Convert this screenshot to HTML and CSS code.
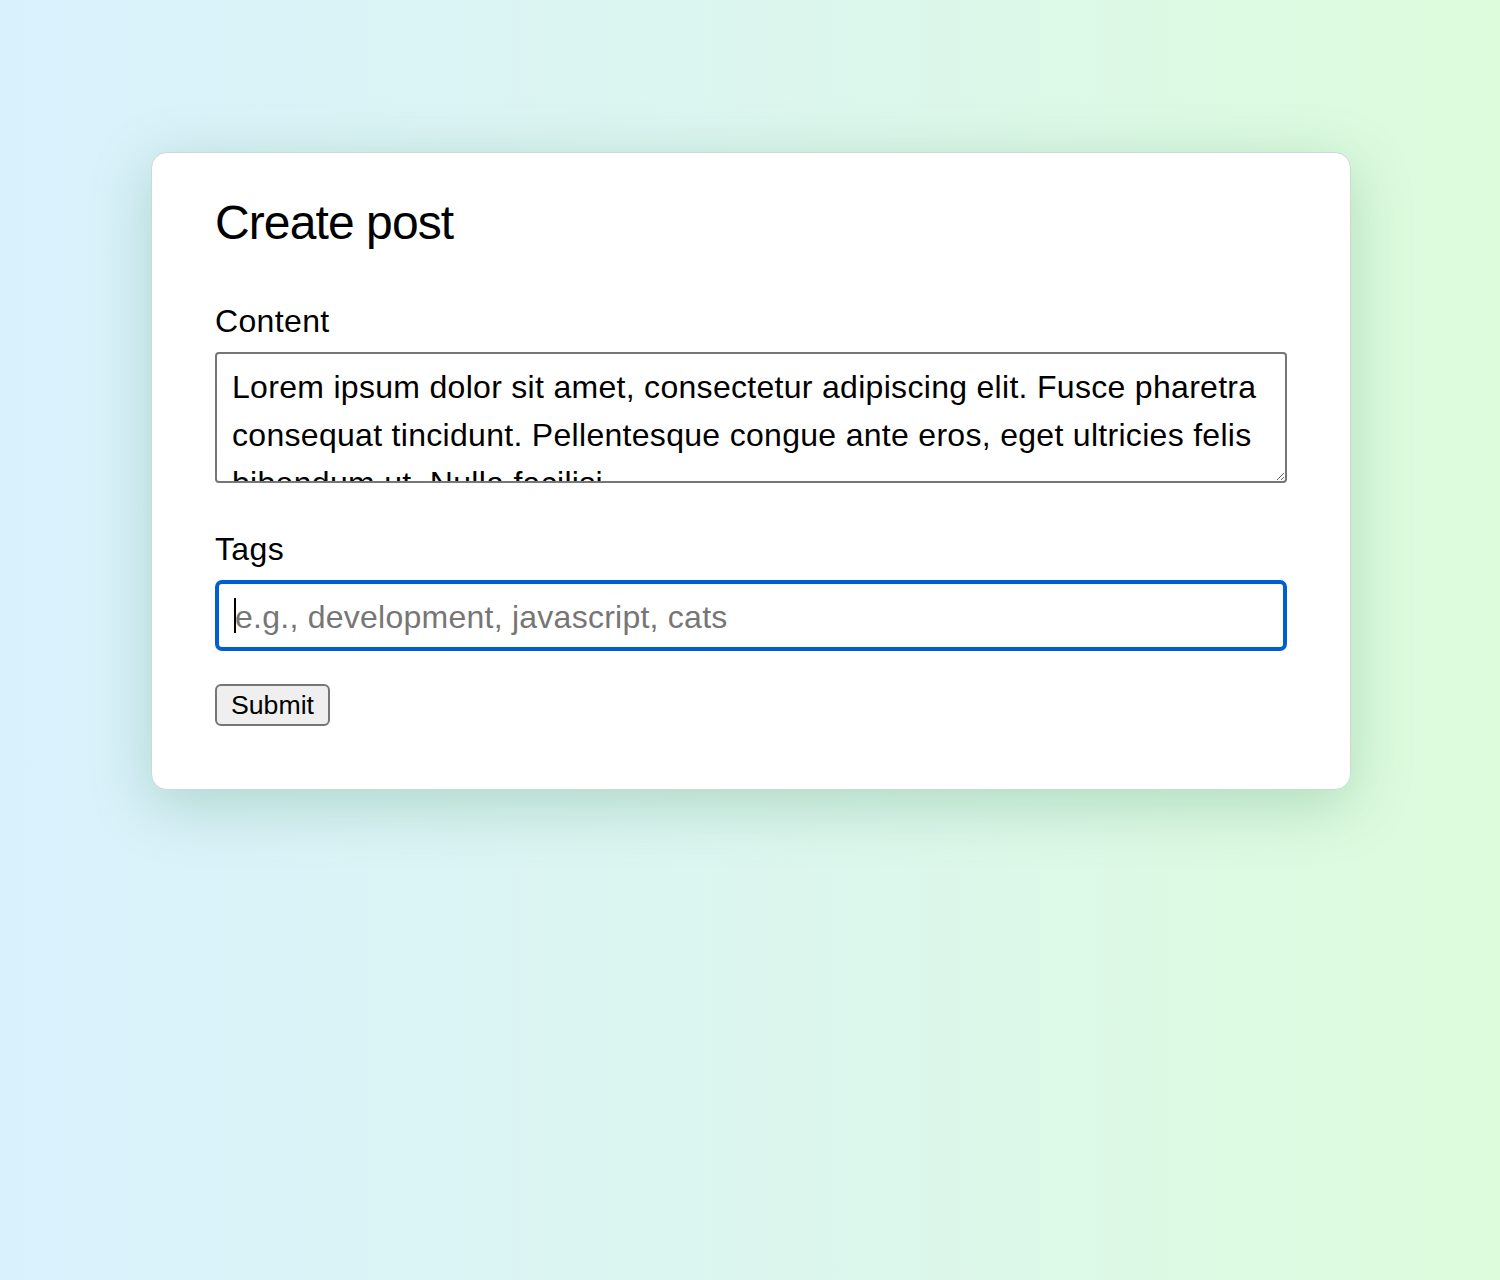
FILE: index.html
```html
<!DOCTYPE html>
<html lang="en">
<head>
<meta charset="utf-8">
<title>Create post</title>
<link rel="stylesheet" href="styles.css">
</head>
<body>
  <main class="card">
    <h1 class="title">Create post</h1>
    <form class="form">
      <label class="label" for="content">Content</label>
      <textarea id="content" class="textarea">Lorem ipsum dolor sit amet, consectetur adipiscing elit. Fusce pharetra consequat tincidunt. Pellentesque congue ante eros, eget ultricies felis bibendum ut. Nulla facilisi.</textarea>
      <label class="label label-tags" for="tags">Tags</label>
      <div class="input-wrap">
        <input id="tags" class="input" type="text" placeholder="e.g., development, javascript, cats">
        <span class="caret"></span>
      </div>
      <button type="button" class="submit">Submit</button>
    </form>
  </main>
</body>
</html>
```

FILE: styles.css
```css
html, body {
  margin: 0;
  padding: 0;
}

body {
  min-height: 1280px;
  padding-left: 2px;
  background: linear-gradient(90deg, #d9f1fd 0%, #dcf6ef 50%, #ddfcdc 100%);
  font-family: "Liberation Sans", Arial, Helvetica, sans-serif;
  color: #000;
  overflow: hidden;
}

.card {
  box-sizing: border-box;
  width: 1200px;
  margin: 152px auto 0;
  padding: 34px 63px 63px;
  background: #fff;
  border: 1px solid #c9dcd4;
  border-radius: 16px;
  box-shadow: 0 14px 60px rgba(60, 140, 90, 0.28);
}

.title {
  margin: 0 0 38px;
  font-size: 48px;
  line-height: 72px;
  font-weight: 400;
  letter-spacing: -0.9px;
}

.form {
  display: flex;
  flex-direction: column;
  align-items: flex-start;
}

.label {
  display: block;
  font-size: 32px;
  line-height: 48px;
  margin-bottom: 7px;
  letter-spacing: 0.35px;
}

.label-tags {
  margin-top: 42px;
}

.textarea {
  box-sizing: border-box;
  width: 100%;
  height: 131px;
  margin: 0;
  padding: 9px 15px 5px;
  border: 2px solid #767676;
  border-radius: 4px;
  font-family: "Liberation Sans", Arial, Helvetica, sans-serif;
  font-size: 32px;
  line-height: 48px;
  letter-spacing: 0.3px;
  color: #000;
  background: #fff;
  overflow: hidden;
  resize: vertical;
}

.input-wrap {
  position: relative;
  width: 100%;
}

.input {
  display: block;
  box-sizing: border-box;
  width: 100%;
  height: 71px;
  margin: 0;
  padding: 4px 16px 0;
  border: 4px solid #0060d0;
  border-radius: 7px;
  outline: none;
  font-family: "Liberation Sans", Arial, Helvetica, sans-serif;
  font-size: 32px;
  letter-spacing: 0.25px;
  color: #000;
  background: #fff;
}

.input::placeholder {
  color: #767676;
  opacity: 1;
}

.caret {
  position: absolute;
  left: 19px;
  top: 18px;
  width: 2px;
  height: 35px;
  background: #000;
}

.submit {
  box-sizing: border-box;
  margin-top: 33px;
  height: 42px;
  padding: 0 14px;
  border: 2px solid #767676;
  border-radius: 6px;
  background: #efefef;
  font-family: "Liberation Sans", Arial, Helvetica, sans-serif;
  font-size: 26.67px;
  color: #000;
  line-height: 1;
}
```
